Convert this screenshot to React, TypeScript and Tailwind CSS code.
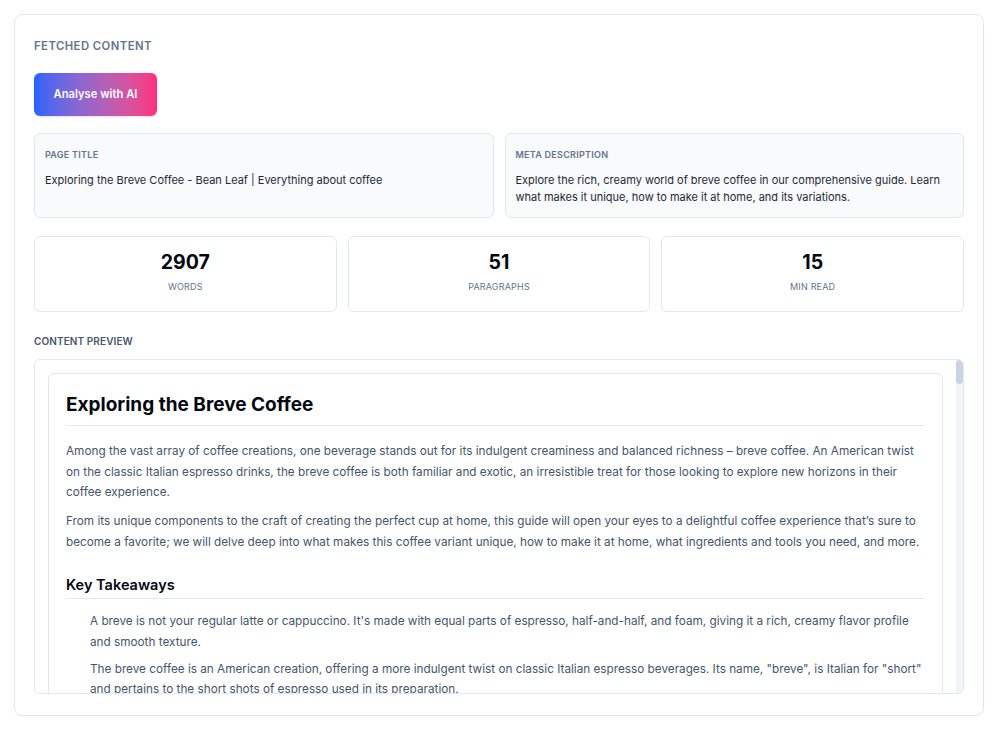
import React from "react";

type Stat = { value: string; label: string };

const STATS: Stat[] = [
  { value: "2907", label: "Words" },
  { value: "51", label: "Paragraphs" },
  { value: "15", label: "Min read" },
];

const INTRO = [
  "Among the vast array of coffee creations, one beverage stands out for its indulgent creaminess and balanced richness – breve coffee. An American twist on the classic Italian espresso drinks, the breve coffee is both familiar and exotic, an irresistible treat for those looking to explore new horizons in their coffee experience.",
  "From its unique components to the craft of creating the perfect cup at home, this guide will open your eyes to a delightful coffee experience that’s sure to become a favorite; we will delve deep into what makes this coffee variant unique, how to make it at home, what ingredients and tools you need, and more.",
];

const TAKEAWAYS = [
  "A breve is not your regular latte or cappuccino. It's made with equal parts of espresso, half-and-half, and foam, giving it a rich, creamy flavor profile and smooth texture.",
  "The breve coffee is an American creation, offering a more indulgent twist on classic Italian espresso beverages. Its name, \"breve\", is Italian for \"short\" and pertains to the short shots of espresso used in its preparation.",
  "Making a breve at home is simple with the right tools: an espresso machine, a milk frother and fresh half-and-half.",
  "Breve coffee can be customised with syrups, spices and alternative dairy to suit your taste.",
];

function InfoCard({ label, text }: { label: string; text: string }) {
  return (
    <div className="min-h-[85px] rounded-md border border-slate-200 bg-slate-50 px-[10px] pt-[15px] pb-[11px]">
      <div className="text-[9px] font-semibold uppercase leading-[12px] tracking-[0.03em] text-slate-500">{label}</div>
      <p className="mt-[11px] text-[11px] leading-[17px] text-gray-800">{text}</p>
    </div>
  );
}

export default function App() {
  return (
    <div className="min-h-screen bg-white pt-[14px] pb-[16px] pl-[14px] pr-[16px]" style={{ fontFamily: "Inter, 'Noto Sans', sans-serif" }}>
      <div className="rounded-lg border border-slate-200 bg-white px-[19px] pt-[24px] pb-[21px]">
        <h2 className="text-[11.3px] font-semibold uppercase leading-[14px] tracking-[0.04em] text-slate-500">Fetched Content</h2>

        <button className="mt-[20px] h-[43px] w-[123px] rounded-md bg-gradient-to-r from-[#2563fb] to-[#ff2d7e] text-[11.2px] font-semibold text-white shadow-sm">
          Analyse with AI
        </button>

        <div className="mt-[17px] grid grid-cols-2 gap-[11px]">
          <InfoCard label="Page Title" text="Exploring the Breve Coffee - Bean Leaf | Everything about coffee" />
          <InfoCard
            label="Meta Description"
            text="Explore the rich, creamy world of breve coffee in our comprehensive guide. Learn what makes it unique, how to make it at home, and its variations."
          />
        </div>

        <div className="mt-[18px] grid grid-cols-3 gap-[11px]">
          {STATS.map((s) => (
            <div key={s.label} className="flex h-[76px] flex-col items-center rounded-md border border-slate-200 bg-white pt-[13px]">
              <div className="text-[19.5px] font-bold leading-[24px] text-gray-950">{s.value}</div>
              <div className="mt-[7px] text-[9px] uppercase leading-[12px] tracking-[0.02em] text-slate-500">{s.label}</div>
            </div>
          ))}
        </div>

        <h3 className="mt-[23px] text-[10px] font-semibold uppercase leading-[12px] tracking-[0.01em] text-slate-600">Content Preview</h3>

        <div className="mt-[12px] flex h-[335px] overflow-hidden rounded-md border border-slate-200 bg-white">
          <div className="min-w-0 flex-1 overflow-hidden pl-[13px] pr-[13px] pt-[13px]">
            <div className="rounded-md border border-slate-200 px-[17px] pt-[19px] pb-[20px]">
              <h1 className="border-b border-slate-200 pb-[8px] text-[19px] font-bold leading-[24px] text-gray-950">
                Exploring the Breve Coffee
              </h1>
              <div className="mt-[15px] space-y-[8.5px]">
                {INTRO.map((p, i) => (
                  <p key={i} className="text-[11.75px] leading-[20.5px] text-slate-600">{p}</p>
                ))}
              </div>
              <h2 className="mt-[23px] border-b border-slate-200 pb-[3px] text-[14.5px] font-semibold leading-[20px] text-gray-950">
                Key Takeaways
              </h2>
              <div className="mt-[12px] space-y-[6.5px] pl-[24px]">
                {TAKEAWAYS.map((p, i) => (
                  <p key={i} className="text-[11.75px] leading-[20.5px] text-slate-600">{p}</p>
                ))}
              </div>
            </div>
          </div>
          {/* scrollbar */}
          <div className="w-[7px] shrink-0 bg-slate-100">
            <div className="h-[24px] w-full rounded-full bg-slate-300" />
          </div>
        </div>
      </div>
    </div>
  );
}
